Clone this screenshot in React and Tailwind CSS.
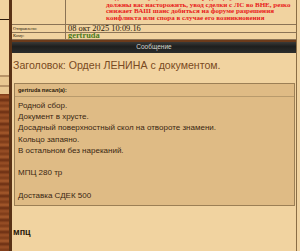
import React from "react";

const quoteLines = [
  "Родной сбор.",
  "Документ в хрусте.",
  "Досадный поверхностный скол на отвороте знамени.",
  "Кольцо запаяно.",
  "В остальном без нареканий.",
  "",
  "МПЦ 280 тр",
  "",
  "Доставка СДЕК 500",
];

const App = () => {
  return (
    <div className="w-[300px] h-[251px] overflow-hidden flex bg-[#f1d3a0] font-['Liberation_Sans',sans-serif]">
      {/* left rail */}
      <div className="w-[9px] flex flex-col shrink-0">
        <div className="h-[19px] bg-[#f1d3a0]" />
        <div className="h-[1px] bg-[#2b1a0c]" />
        <div className="h-[55px] bg-[#f1d3a0]" />
        <div className="h-[2px] bg-[#b89468]" />
        <div className="h-[8px] bg-[#e9c892]" />
        <div className="h-[2px] bg-[#b89468]" />
        <div className="h-[7px] bg-[#e9c892]" />
        <div className="flex-1 bg-[repeating-linear-gradient(180deg,#7c3a18_0px,#a65a2c_3px,#6a2e12_6px,#9a5026_9px,#7c3a18_12px)]" />
      </div>
      <div className="w-[3px] shrink-0 bg-[#5a3216]" />

      {/* main column */}
      <div className="w-[285px] shrink-0 flex flex-col border-r border-[#8a6d45]">
        {/* info table */}
        <div className="flex flex-col font-['Liberation_Serif',serif]">
          <div className="h-[25px] flex border-b border-[#8b7355] overflow-hidden">
            <div className="w-[54px] border-r border-[#8b7355]" />
            <div className="flex-1 pl-[40px] -mt-[5px] text-[7px] leading-[6.6px] font-bold text-[#e8201a] whitespace-nowrap">
              <div>не должно смущать желание продавца уйти в ЛС,</div>
              <div>должны вас насторожить, увод сделки с ЛС во ВНЕ, резко</div>
              <div>снижает ВАШ шанс добиться на форуме разрешения</div>
              <div>конфликта или спора в случае его возникновения</div>
            </div>
          </div>
          <div className="h-[8px] flex border-b border-[#8b7355] overflow-hidden">
            <div className="w-[54px] border-r border-[#8b7355] pl-[1px] text-[4.5px] leading-[7px] text-[#2a1a0a]">
              Отправлено:
            </div>
            <div className="flex-1 pl-[2px] text-[8.4px] leading-[7px] text-[#2a1a0a]">
              08 окт 2025 10:09.16
            </div>
          </div>
          <div className="h-[7px] flex border-b border-[#8b7355] overflow-hidden">
            <div className="w-[54px] border-r border-[#8b7355] pl-[1px] text-[4.5px] leading-[6px] text-[#2a1a0a]">
              Кому:
            </div>
            <div className="flex-1 pl-[2px] text-[8.4px] leading-[6px] font-bold text-[#4a7a1c]">
              gertruda
            </div>
          </div>
        </div>

        {/* header bar */}
        <div className="h-[13px] border-t-2 border-[#6b3a1a] bg-[linear-gradient(180deg,#3a3a38,#1e1f1e_40%,#2c2d2b)] flex items-center justify-center">
          <span className="text-[6.5px] leading-none text-[#d8d8d0]">Сообщение</span>
        </div>

        {/* body */}
        <div className="flex flex-col pl-[1px] pt-[6px]">
          <div className="text-[10.6px] leading-[13px] text-[#7a4a22] whitespace-nowrap">
            Заголовок: Орден ЛЕНИНА с документом.
          </div>
          <div className="mt-[11px] ml-[1px] mr-[1px] border border-[#9c7f55] bg-[#dfbb85] flex flex-col">
            <div className="px-[3px] pt-[3px] pb-[2px] text-[5.5px] leading-[7px] font-bold text-[#2a1a0a] border-b border-[#b89a6c]">
              gertruda писал(а):
            </div>
            <div className="px-[3px] pt-[3px] pb-[4px] text-[8px] leading-[11.2px] text-[#3a2612]">
              {quoteLines.map((line, i) => (
                <div key={i} className="h-[11.2px] whitespace-nowrap">
                  {line}
                </div>
              ))}
            </div>
          </div>
          <div className="mt-[20px] text-[9px] leading-[12px] font-bold text-[#2a1a0a]">мпц</div>
        </div>
      </div>
      <div className="flex-1 bg-[#f1d3a0]" />
    </div>
  );
};

export default App;
